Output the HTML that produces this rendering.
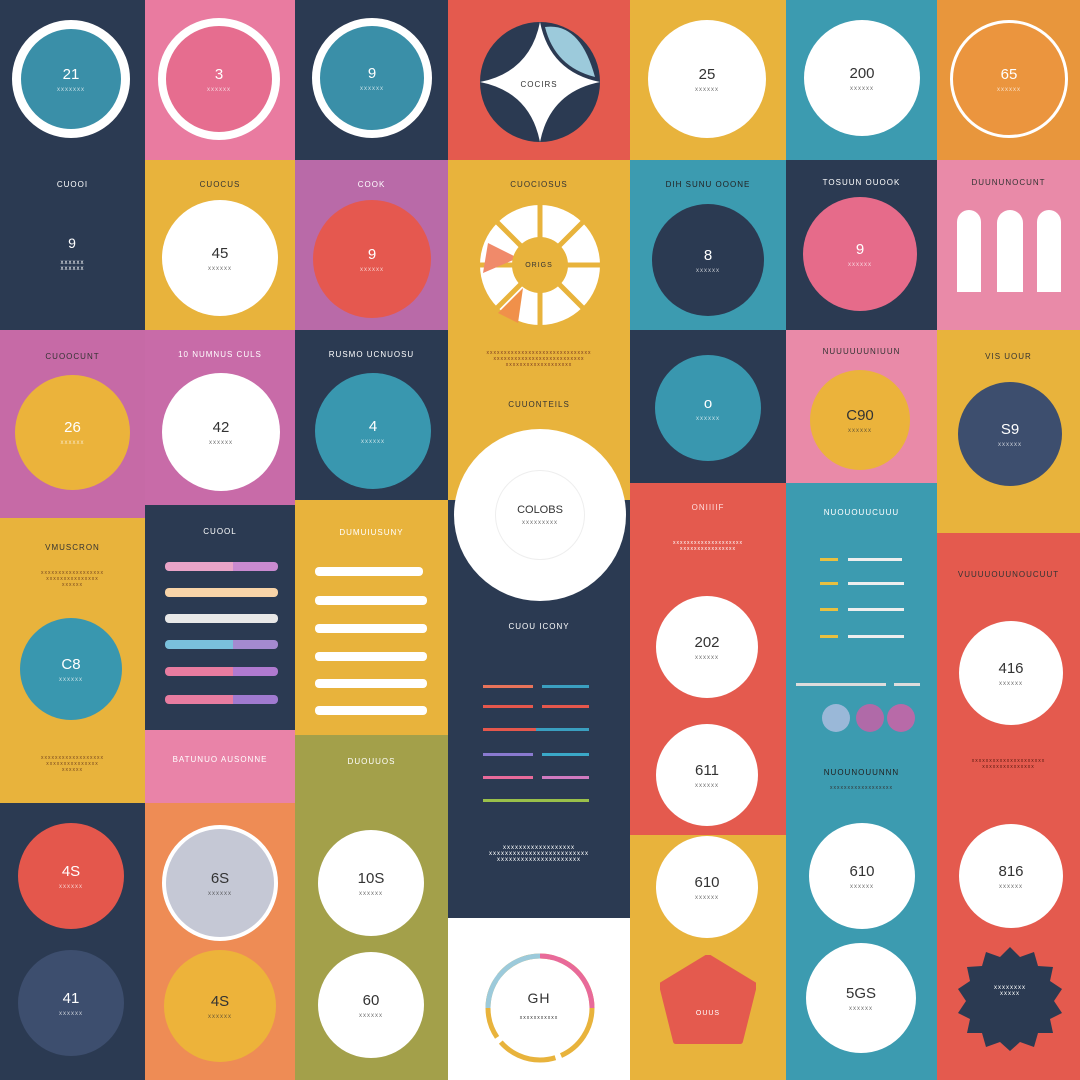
<!DOCTYPE html>
<html><head><style>
body{margin:0;width:1080px;height:1080px;position:relative;overflow:hidden;font-family:"Liberation Sans",sans-serif;background:#2b3a52}
.b{position:absolute}
.c{position:absolute;border-radius:50%;display:flex;flex-direction:column;align-items:center;justify-content:center;color:#333;box-sizing:border-box}
.c b{font-weight:normal;font-size:15px}
.c i{font-style:normal;font-size:6px;letter-spacing:1px;margin-top:4px;opacity:.7}
.t{position:absolute;font-size:8px;letter-spacing:1px;text-align:center;color:#fff}
.bar{position:absolute;height:9px;border-radius:4px}
.ln{position:absolute;height:3px}
</style></head><body>
<!-- col1 -->
<div class="b" style="left:0;top:0;width:145px;height:330px;background:#2b3a52"></div>
<div class="c" style="left:12px;top:20px;width:118px;height:118px;border:9px solid #fff;background:#3a8fa8;color:#fff"><b>21</b><i>xxxxxxx</i></div>
<div class="t" style="left:0;top:180px;width:145px">CUOOI</div>
<div class="t" style="left:0;top:235px;width:145px;font-size:14px">9</div>
<div class="t" style="left:0;top:260px;width:145px;font-size:6px">xxxxxx<br>xxxxxx</div>
<div class="b" style="left:0;top:330px;width:145px;height:188px;background:#c66aa6"></div>
<div class="t" style="left:0;top:352px;width:145px;color:#333">CUOOCUNT</div>
<div class="c" style="left:15px;top:375px;width:115px;height:115px;background:#ebb33b;color:#fff"><b>26</b><i>xxxxxx</i></div>
<div class="b" style="left:0;top:518px;width:145px;height:285px;background:#e8b33c"></div>
<div class="t" style="left:0;top:543px;width:145px;color:#333">VMUSCRON</div>
<div class="t" style="left:0;top:570px;width:145px;color:#7a4a20;font-size:5px">xxxxxxxxxxxxxxxxxx<br>xxxxxxxxxxxxxxx<br>xxxxxx</div>
<div class="c" style="left:20px;top:618px;width:102px;height:102px;background:#3997af;color:#fff"><b>C8</b><i>xxxxxx</i></div>
<div class="t" style="left:0;top:755px;width:145px;color:#7a4a20;font-size:5px">xxxxxxxxxxxxxxxxxx<br>xxxxxxxxxxxxxxx<br>xxxxxx</div>
<div class="b" style="left:0;top:803px;width:145px;height:277px;background:#2b3a52"></div>
<div class="c" style="left:18px;top:823px;width:106px;height:106px;background:#e4574c;color:#fff"><b>4S</b><i>xxxxxx</i></div>
<div class="c" style="left:18px;top:950px;width:106px;height:106px;background:#3d4e6e;color:#fff"><b>41</b><i>xxxxxx</i></div>
<!-- col2 -->
<div class="b" style="left:145px;top:0;width:150px;height:160px;background:#e97ba0"></div>
<div class="c" style="left:158px;top:18px;width:122px;height:122px;border:8px solid #fff;background:#e66d8f;color:#fff"><b>3</b><i>xxxxxx</i></div>
<div class="b" style="left:145px;top:160px;width:150px;height:170px;background:#e8b33c"></div>
<div class="t" style="left:145px;top:180px;width:150px;color:#333">CUOCUS</div>
<div class="c" style="left:162px;top:200px;width:116px;height:116px;background:#fff"><b>45</b><i>xxxxxx</i></div>
<div class="b" style="left:145px;top:330px;width:150px;height:175px;background:#c86ba8"></div>
<div class="t" style="left:145px;top:350px;width:150px">10 NUMNUS CULS</div>
<div class="c" style="left:162px;top:373px;width:118px;height:118px;background:#fff"><b>42</b><i>xxxxxx</i></div>
<div class="b" style="left:145px;top:505px;width:150px;height:225px;background:#2b3a52"></div>
<div class="t" style="left:145px;top:527px;width:150px">CUOOL</div>
<div class="bar" style="left:165px;top:562px;width:113px;background:linear-gradient(90deg,#e9a4c8 60%,#c98ad0 60%)"></div>
<div class="bar" style="left:165px;top:588px;width:113px;background:#f8d4a8"></div>
<div class="bar" style="left:165px;top:614px;width:113px;background:#e8e8e8"></div>
<div class="bar" style="left:165px;top:640px;width:113px;background:linear-gradient(90deg,#7ac0dc 60%,#a48ad0 60%)"></div>
<div class="bar" style="left:165px;top:667px;width:113px;background:linear-gradient(90deg,#e87ca0 60%,#b07ad0 60%)"></div>
<div class="bar" style="left:165px;top:695px;width:113px;background:linear-gradient(90deg,#e87ca0 60%,#a07ad0 60%)"></div>
<div class="b" style="left:145px;top:730px;width:150px;height:73px;background:#e983a8"></div>
<div class="t" style="left:145px;top:755px;width:150px">BATUNUO AUSONNE</div>
<div class="b" style="left:145px;top:803px;width:150px;height:277px;background:#ee8c55"></div>
<div class="c" style="left:162px;top:825px;width:116px;height:116px;border:4px solid #fff;background:#c5c8d5"><b>6S</b><i>xxxxxx</i></div>
<div class="c" style="left:164px;top:950px;width:112px;height:112px;background:#edb33a"><b>4S</b><i>xxxxxx</i></div>
<!-- col3 -->
<div class="b" style="left:295px;top:0;width:153px;height:160px;background:#2b3a52"></div>
<div class="c" style="left:312px;top:18px;width:120px;height:120px;border:8px solid #fff;background:#3a8fa8;color:#fff"><b>9</b><i>xxxxxx</i></div>
<div class="b" style="left:295px;top:160px;width:153px;height:170px;background:#b96aa8"></div>
<div class="t" style="left:295px;top:180px;width:153px">COOK</div>
<div class="c" style="left:313px;top:200px;width:118px;height:118px;background:#e5584f;color:#fff"><b>9</b><i>xxxxxx</i></div>
<div class="b" style="left:295px;top:330px;width:153px;height:170px;background:#2b3a52"></div>
<div class="t" style="left:295px;top:350px;width:153px">RUSMO UCNUOSU</div>
<div class="c" style="left:315px;top:373px;width:116px;height:116px;background:#3997af;color:#fff"><b>4</b><i>xxxxxx</i></div>
<div class="b" style="left:295px;top:500px;width:153px;height:235px;background:#e8b33c"></div>
<div class="t" style="left:295px;top:528px;width:153px">DUMUIUSUNY</div>
<div class="bar" style="left:315px;top:567px;width:108px;background:#fff"></div>
<div class="bar" style="left:315px;top:596px;width:112px;background:#fff"></div>
<div class="bar" style="left:315px;top:624px;width:112px;background:#fff"></div>
<div class="bar" style="left:315px;top:652px;width:112px;background:#fff"></div>
<div class="bar" style="left:315px;top:679px;width:112px;background:#fff"></div>
<div class="bar" style="left:315px;top:706px;width:112px;background:#fff"></div>
<div class="b" style="left:295px;top:735px;width:153px;height:345px;background:#a3a04a"></div>
<div class="t" style="left:295px;top:757px;width:153px">DUOUUOS</div>
<div class="c" style="left:318px;top:830px;width:106px;height:106px;background:#fff"><b>10S</b><i>xxxxxx</i></div>
<div class="c" style="left:318px;top:952px;width:106px;height:106px;background:#fff"><b>60</b><i>xxxxxx</i></div>
<!-- col4 -->
<div class="b" style="left:448px;top:0;width:182px;height:160px;background:#e45a4e"></div>
<div class="c" style="left:480px;top:22px;width:120px;height:120px;background:#2b3a52"></div>
<svg class="b" style="left:480px;top:22px" width="120" height="120"><path d="M60 0 Q70 50 120 60 Q70 70 60 120 Q50 70 0 60 Q50 50 60 0Z" fill="#fff"/><path d="M65 5 Q100 0 115 55 Q75 45 65 5Z" fill="#9ccadb"/></svg>
<div class="t" style="left:448px;top:80px;width:182px;color:#333">COCIRS</div>
<div class="b" style="left:448px;top:160px;width:182px;height:340px;background:#e8b33c"></div>
<div class="t" style="left:448px;top:180px;width:182px;color:#333">CUOCIOSUS</div>
<svg class="b" style="left:478px;top:203px" width="124" height="124"><circle cx="62" cy="62" r="60" fill="#fff"/><g stroke="#e8b33c" stroke-width="5"><line x1="62" y1="0" x2="62" y2="124"/><line x1="0" y1="62" x2="124" y2="62"/><line x1="18" y1="18" x2="106" y2="106"/><line x1="106" y1="18" x2="18" y2="106"/></g><path d="M10 40 L40 55 L5 70Z" fill="#f08a6a"/><path d="M20 110 L45 85 L40 120Z" fill="#f0904a"/><circle cx="62" cy="62" r="28" fill="#e8b33c"/></svg>
<div class="t" style="left:448px;top:262px;width:182px;color:#333;font-size:7px">ORIGS</div>
<div class="t" style="left:448px;top:350px;width:182px;color:#7a3a20;font-size:5px">xxxxxxxxxxxxxxxxxxxxxxxxxxxxxx<br>xxxxxxxxxxxxxxxxxxxxxxxxxx<br>xxxxxxxxxxxxxxxxxxx</div>
<div class="t" style="left:448px;top:400px;width:182px;color:#333">CUUONTEILS</div>
<div class="b" style="left:448px;top:500px;width:182px;height:418px;background:#2b3a52"></div>
<div class="c" style="left:454px;top:429px;width:172px;height:172px;background:#fff;color:#333"><div class="c" style="position:relative;width:90px;height:90px;border:1px solid #eee"><b style="font-size:11px">COLOBS</b><i>xxxxxxxxx</i></div></div>
<div class="t" style="left:448px;top:622px;width:182px">CUOU ICONY</div>
<div class="ln" style="left:483px;top:685px;width:50px;background:#e8735a"></div><div class="ln" style="left:542px;top:685px;width:47px;background:#3a9fc0"></div>
<div class="ln" style="left:483px;top:705px;width:50px;background:#e6574c"></div><div class="ln" style="left:542px;top:705px;width:47px;background:#e6574c"></div>
<div class="ln" style="left:483px;top:728px;width:106px;background:linear-gradient(90deg,#e6574c 50%,#3a9fc0 50%)"></div>
<div class="ln" style="left:483px;top:753px;width:50px;background:#8a7ad0"></div><div class="ln" style="left:542px;top:753px;width:47px;background:#3aa8c8"></div>
<div class="ln" style="left:483px;top:776px;width:50px;background:#e86a9a"></div><div class="ln" style="left:542px;top:776px;width:47px;background:#d07ac0"></div>
<div class="ln" style="left:483px;top:799px;width:106px;background:#9ac04a"></div>
<div class="t" style="left:448px;top:845px;width:182px;font-size:6px">xxxxxxxxxxxxxxxxxx<br>xxxxxxxxxxxxxxxxxxxxxxxxx<br>xxxxxxxxxxxxxxxxxxxxx</div>
<div class="b" style="left:448px;top:918px;width:182px;height:162px;background:#fff"></div>
<svg class="b" style="left:484px;top:952px" width="112" height="112"><circle cx="56" cy="56" r="52" fill="none" stroke="#e8b33c" stroke-width="5" stroke-dasharray="60 6"/><path d="M56 4 A52 52 0 0 1 108 56" fill="none" stroke="#e86a9a" stroke-width="5"/><path d="M4 56 A52 52 0 0 1 56 4" fill="none" stroke="#9ccadb" stroke-width="5"/></svg>
<div class="t" style="left:448px;top:990px;width:182px;color:#333;font-size:14px">GH<br><span style="font-size:5px">xxxxxxxxxxx</span></div>
<!-- col5 -->
<div class="b" style="left:630px;top:0;width:156px;height:160px;background:#e8b33c"></div>
<div class="c" style="left:648px;top:20px;width:118px;height:118px;background:#fff"><b>25</b><i>xxxxxx</i></div>
<div class="b" style="left:630px;top:160px;width:156px;height:170px;background:#3c9bb0"></div>
<div class="t" style="left:630px;top:180px;width:156px;color:#222">DIH SUNU OOONE</div>
<div class="c" style="left:652px;top:204px;width:112px;height:112px;background:#2b3a52;color:#fff"><b>8</b><i>xxxxxx</i></div>
<div class="b" style="left:630px;top:330px;width:156px;height:153px;background:#2b3a52"></div>
<div class="c" style="left:655px;top:355px;width:106px;height:106px;background:#3997af;color:#fff"><b>o</b><i>xxxxxx</i></div>
<div class="b" style="left:630px;top:483px;width:156px;height:352px;background:#e45a4e"></div>
<div class="t" style="left:630px;top:503px;width:156px;color:#fdd">ONIIIIF</div>
<div class="t" style="left:630px;top:540px;width:156px;font-size:5px">xxxxxxxxxxxxxxxxxxxx<br>xxxxxxxxxxxxxxxx</div>
<div class="c" style="left:656px;top:596px;width:102px;height:102px;background:#fff"><b>202</b><i>xxxxxx</i></div>
<div class="c" style="left:656px;top:724px;width:102px;height:102px;background:#fff"><b>611</b><i>xxxxxx</i></div>
<div class="b" style="left:630px;top:835px;width:156px;height:245px;background:#e8b33c"></div>
<div class="c" style="left:656px;top:836px;width:102px;height:102px;background:#fff"><b>610</b><i>xxxxxx</i></div>
<svg class="b" style="left:660px;top:955px" width="96" height="90"><path d="M48 2 L94 30 L80 86 L16 86 L2 30Z" fill="#e45a4e" stroke="#e45a4e" stroke-width="6" stroke-linejoin="round"/></svg>
<div class="t" style="left:630px;top:1010px;width:156px;font-size:7px">OUUS</div>
<!-- col6 -->
<div class="b" style="left:786px;top:0;width:151px;height:160px;background:#3c9bb0"></div>
<div class="c" style="left:804px;top:20px;width:116px;height:116px;background:#fff"><b>200</b><i>xxxxxx</i></div>
<div class="b" style="left:786px;top:160px;width:151px;height:170px;background:#2b3a52"></div>
<div class="t" style="left:786px;top:178px;width:151px">TOSUUN OUOOK</div>
<div class="c" style="left:803px;top:197px;width:114px;height:114px;background:#e66b8a;color:#fff"><b>9</b><i>xxxxxx</i></div>
<div class="b" style="left:786px;top:330px;width:151px;height:153px;background:#e98aa8"></div>
<div class="t" style="left:786px;top:347px;width:151px;color:#333">NUUUUUUNIUUN</div>
<div class="c" style="left:810px;top:370px;width:100px;height:100px;background:#ebb33b"><b>C90</b><i>xxxxxx</i></div>
<div class="b" style="left:786px;top:483px;width:151px;height:597px;background:#3c9bb0"></div>
<div class="t" style="left:786px;top:508px;width:151px;color:#fff">NUOUOUUCUUU</div>
<div class="ln" style="left:848px;top:558px;width:54px;background:#eee"></div>
<div class="ln" style="left:848px;top:582px;width:56px;background:#eee"></div>
<div class="ln" style="left:848px;top:608px;width:56px;background:#eee"></div>
<div class="ln" style="left:848px;top:635px;width:56px;background:#eee"></div>
<div class="ln" style="left:820px;top:558px;width:18px;background:#e8c040"></div>
<div class="ln" style="left:820px;top:582px;width:18px;background:#e8c040"></div>
<div class="ln" style="left:820px;top:608px;width:18px;background:#e8c040"></div>
<div class="ln" style="left:820px;top:635px;width:18px;background:#e8c040"></div>
<div class="ln" style="left:796px;top:683px;width:90px;background:#ddd"></div>
<div class="ln" style="left:894px;top:683px;width:26px;background:#ddd"></div>
<div class="c" style="left:822px;top:704px;width:28px;height:28px;background:#9ab8d8"></div>
<div class="c" style="left:856px;top:704px;width:28px;height:28px;background:#b06aa8"></div>
<div class="c" style="left:887px;top:704px;width:28px;height:28px;background:#b86aa8"></div>
<div class="t" style="left:786px;top:768px;width:151px;color:#222">NUOUNOUUNNN</div>
<div class="t" style="left:786px;top:785px;width:151px;color:#333;font-size:5px">xxxxxxxxxxxxxxxxxx</div>
<div class="c" style="left:809px;top:823px;width:106px;height:106px;background:#fff"><b>610</b><i>xxxxxx</i></div>
<div class="c" style="left:806px;top:943px;width:110px;height:110px;background:#fff"><b>5GS</b><i>xxxxxx</i></div>
<!-- col7 -->
<div class="b" style="left:937px;top:0;width:143px;height:160px;background:#e8963c"></div>
<div class="c" style="left:950px;top:20px;width:118px;height:118px;border:3px solid #fff;background:#eb953e;color:#fff"><b>65</b><i>xxxxxx</i></div>
<div class="b" style="left:937px;top:160px;width:143px;height:170px;background:#e98aa8"></div>
<div class="t" style="left:937px;top:178px;width:143px;color:#333">DUUNUNOCUNT</div>
<div class="b" style="left:957px;top:210px;width:24px;height:82px;background:#fff;border-radius:12px 12px 0 0"></div>
<div class="b" style="left:997px;top:210px;width:26px;height:82px;background:#fff;border-radius:13px 13px 0 0"></div>
<div class="b" style="left:1037px;top:210px;width:24px;height:82px;background:#fff;border-radius:12px 12px 0 0"></div>
<div class="b" style="left:937px;top:330px;width:143px;height:203px;background:#e8b33c"></div>
<div class="t" style="left:937px;top:352px;width:143px;color:#333">VIS UOUR</div>
<div class="c" style="left:958px;top:382px;width:104px;height:104px;background:#3d4e6e;color:#fff"><b>S9</b><i>xxxxxx</i></div>
<div class="b" style="left:937px;top:533px;width:143px;height:547px;background:#e45a4e"></div>
<div class="t" style="left:937px;top:570px;width:143px;color:#333">VUUUUOUUNOUCUUT</div>
<div class="c" style="left:959px;top:621px;width:104px;height:104px;background:#fff"><b>416</b><i>xxxxxx</i></div>
<div class="t" style="left:937px;top:758px;width:143px;color:#5a1a10;font-size:5px">xxxxxxxxxxxxxxxxxxxxx<br>xxxxxxxxxxxxxxx</div>
<div class="c" style="left:959px;top:824px;width:104px;height:104px;background:#fff"><b>816</b><i>xxxxxx</i></div>
<svg class="b" style="left:958px;top:947px" width="104" height="104"><polygon points="52,0 62,10 76,5 80,19 95,20 92,34 104,42 96,54 104,66 92,72 95,86 80,86 76,100 62,95 52,104 42,95 28,100 24,86 9,86 12,72 0,66 8,54 0,42 12,34 9,20 24,19 28,5 42,10" fill="#2b3a52"/></svg>
<div class="t" style="left:958px;top:985px;width:104px;font-size:6px">xxxxxxxx<br>xxxxx</div>
</body></html>
